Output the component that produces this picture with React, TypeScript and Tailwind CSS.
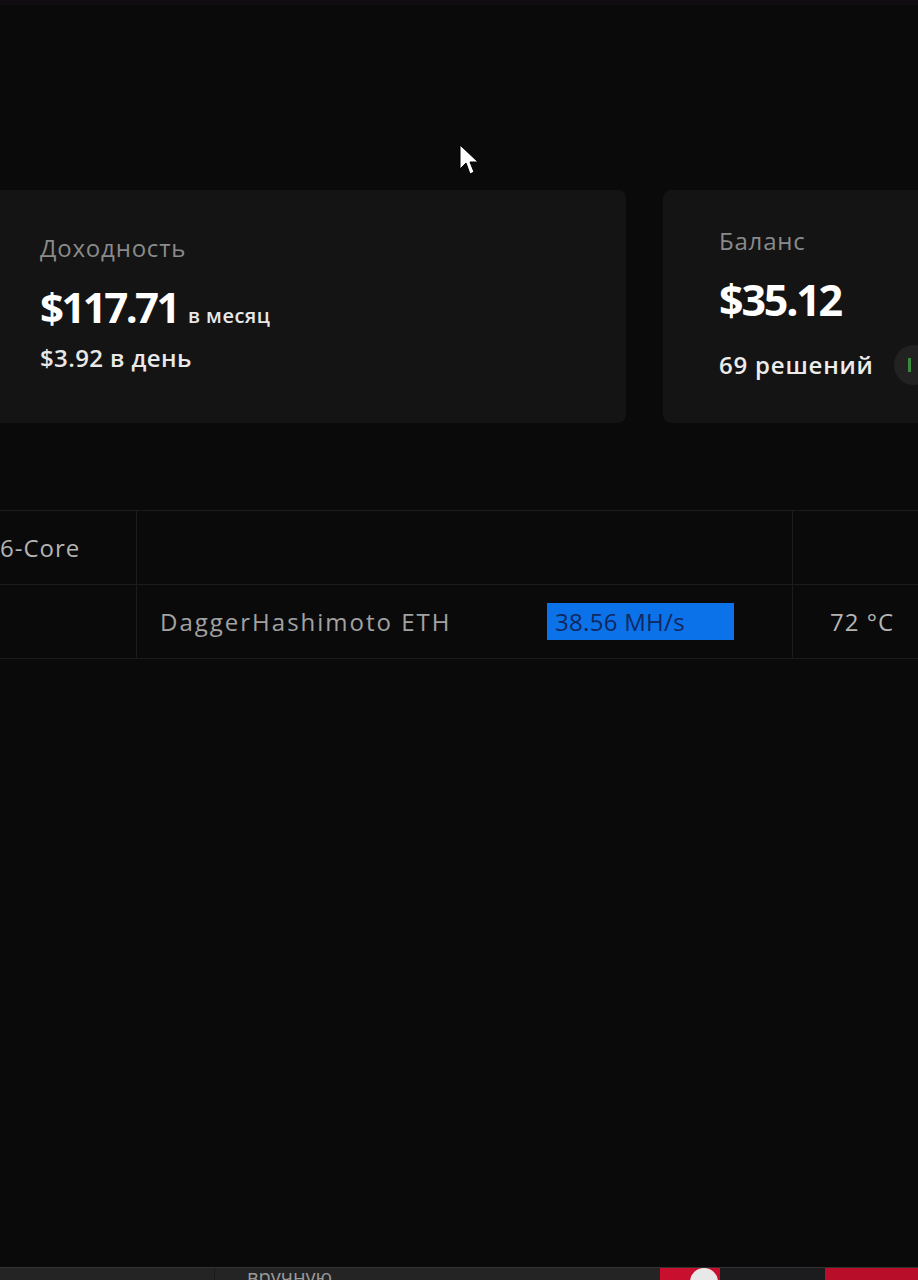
import React from "react";

const font = { fontFamily: '"Open Sans", "Noto Sans", sans-serif' };

export default function App() {
  return (
    <div
      className="relative w-[918px] h-[1280px] overflow-hidden bg-[#0a0a0a] flex flex-col"
      style={font}
    >
      {/* top strip */}
      <div className="h-[5px] bg-[#100c12]" />

      {/* stat cards */}
      <div className="mt-[185px] flex gap-[37px] h-[233px]">
        <div className="w-[626px] shrink-0 rounded-r-lg bg-[#141414] pl-10 pt-[43px]">
          <div className="text-[24px] leading-[30px] tracking-[0.8px] text-[#8a8a8a]">Доходность</div>
          <div className="mt-[19px] flex items-baseline gap-[10px] h-[50px]">
            <span className="text-[42px] leading-[50px] font-bold tracking-[-2.6px] text-white">
              $117.71
            </span>
            <span className="text-[20px] font-semibold text-[#e8e8e8] tracking-[0.5px]">в месяц</span>
          </div>
          <div className="mt-[11px] text-[24px] leading-[30px] font-semibold text-[#e8e8e8] tracking-[0.4px]">
            $3.92 в день
          </div>
        </div>
        <div className="flex-1 min-w-0 overflow-hidden rounded-l-lg bg-[#141414] pl-14 pt-[36px]">
          <div className="text-[24px] leading-[30px] tracking-[0.8px] text-[#8a8a8a]">Баланс</div>
          <div className="mt-[19px] text-[43px] leading-[50px] font-bold tracking-[-2.2px] text-white">
            $35.12
          </div>
          <div className="mt-[20px] flex items-center gap-[20px] h-[40px] w-[300px]">
            <span className="whitespace-nowrap text-[24px] leading-[30px] font-semibold tracking-[0.8px] text-[#ececec]">
              69 решений
            </span>
            <span className="w-[40px] h-[40px] shrink-0 rounded-full bg-[#222222] flex items-center pl-[14px]">
              <span className="w-[3px] h-[14px] bg-[#3b8a3b]" />
            </span>
          </div>
        </div>
      </div>

      {/* table */}
      <div className="mt-[87px] border-t border-[#1c1c1c]">
        <div className="flex h-[74px] border-b border-[#1c1c1c]">
          <div className="w-[137px] border-r border-[#1c1c1c] flex items-center text-[24px] tracking-[1px] text-[#b4b4b4]">
            6-Core
          </div>
          <div className="w-[656px] border-r border-[#1c1c1c]" />
          <div className="flex-1" />
        </div>
        <div className="flex h-[74px] border-b border-[#1c1c1c]">
          <div className="w-[137px] border-r border-[#1c1c1c]" />
          <div className="w-[656px] border-r border-[#1c1c1c] flex items-center pl-[23px]">
            <span className="w-[387px] whitespace-nowrap text-[24px] tracking-[2px] text-[#a2a2a2]">
              DaggerHashimoto ETH
            </span>
            <span className="w-[187px] h-[37px] bg-[#0b72ea] flex items-center pl-[8px] text-[24px] tracking-[0.3px] text-[#10285e]">
              38.56 MH/s
            </span>
          </div>
          <div className="flex-1 flex items-center pl-[37px] text-[24px] tracking-[1px] text-[#b4b4b4]">72 °C</div>
        </div>
      </div>

      <div className="flex-1" />

      {/* bottom strip */}
      <div className="h-[13px] bg-[#242424] border-t border-[#333] flex overflow-hidden">
        <div className="w-[215px] border-r border-[#1a1a1a]" />
        <div className="w-[445px] pl-[32px] text-[20px] leading-[22px] text-[#9a9a9a] -mt-[2px]">вручную</div>
        <div className="relative w-[60px] bg-[#c8102e]">
          <span className="absolute left-[30px] top-0 w-[28px] h-[28px] rounded-full bg-[#e8e8e8]" />
        </div>
        <div className="w-[105px] bg-[#1c1c1e]" />
        <div className="flex-1 bg-[#b80e2a]" />
      </div>

      {/* cursor */}
      <svg
        className="absolute left-[459px] top-[144px]"
        width="22"
        height="34"
        viewBox="0 0 22 34"
      >
        <path
          d="M1 1 L1 25 L7 19 L11 30 L15 28 L11 18 L19 18 Z"
          fill="#ffffff"
          stroke="#000000"
          strokeWidth="1"
        />
      </svg>
    </div>
  );
}
